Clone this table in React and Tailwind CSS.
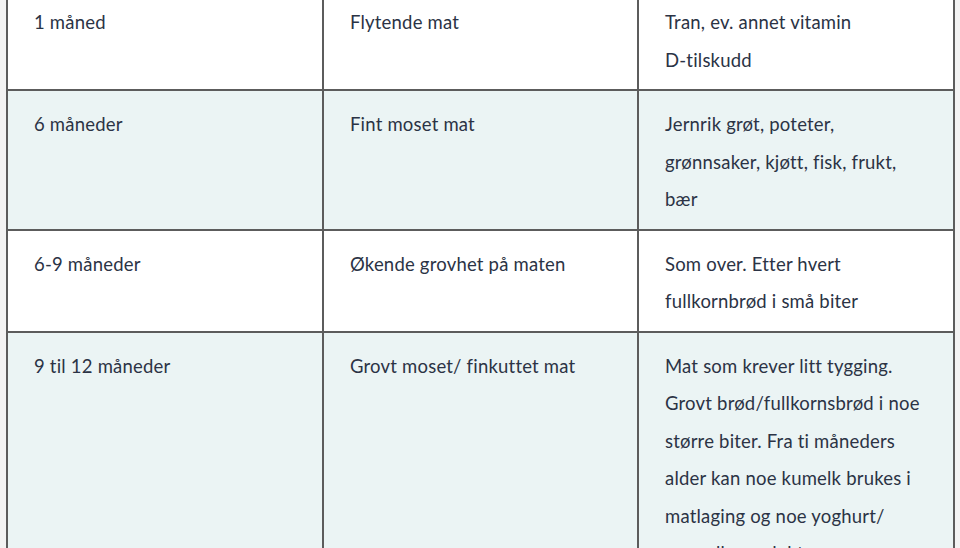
const rows = [
  {
    age: '1 måned',
    texture: 'Flytende mat',
    food: ['Tran, ev. annet vitamin', 'D-tilskudd'],
    shaded: false,
    first: true,
  },
  {
    age: '6 måneder',
    texture: 'Fint moset mat',
    food: ['Jernrik grøt, poteter,', 'grønnsaker, kjøtt, fisk, frukt,', 'bær'],
    shaded: true,
  },
  {
    age: '6-9 måneder',
    texture: 'Økende grovhet på maten',
    food: ['Som over. Etter hvert', 'fullkornbrød i små biter'],
    shaded: false,
  },
  {
    age: '9 til 12 måneder',
    texture: 'Grovt moset/ finkuttet mat',
    food: [
      'Mat som krever litt tygging.',
      'Grovt brød/fullkornsbrød i noe',
      'større biter. Fra ti måneders',
      'alder kan noe kumelk brukes i',
      'matlaging og noe yoghurt/',
      'surmelksprodukter',
    ],
    shaded: true,
  },
]

function Cell({ children, last }) {
  return (
    <td
      className={
        'align-top pl-[26px] pr-4 pb-[10px] ' +
        (last ? '' : 'border-r-2 border-[#5c5c5c]')
      }
    >
      {children}
    </td>
  )
}

function Lines({ items }) {
  return items.map((line) => (
    <div key={line} className="h-[37.5px] leading-[37.5px] whitespace-nowrap">
      {line}
    </div>
  ))
}

export default function App() {
  return (
    <div className="h-[548px] overflow-hidden bg-[#f3f3f3] pl-[6px] pr-[6px]">
      <table
        className="w-[947px] table-fixed border-collapse border-x-2 border-[#5c5c5c] text-[18.5px] tracking-[0.2px] text-[#2b3345]"
        style={{ fontFamily: 'Lato, "Open Sans", sans-serif' }}
      >
        <colgroup>
          <col className="w-[316px]" />
          <col className="w-[315px]" />
          <col className="w-[316px]" />
        </colgroup>
        <tbody>
          {rows.map((row) => (
            <tr
              key={row.age}
              className={
                (row.shaded ? 'bg-[#ebf4f4] ' : 'bg-white ') +
                (row.first ? '[&>td]:pt-[4px] ' : '[&>td]:pt-[15px] ') +
                'border-b-2 border-[#5c5c5c]'
              }
            >
              <Cell>
                <Lines items={[row.age]} />
              </Cell>
              <Cell>
                <Lines items={[row.texture]} />
              </Cell>
              <Cell last>
                <Lines items={row.food} />
              </Cell>
            </tr>
          ))}
        </tbody>
      </table>
    </div>
  )
}
